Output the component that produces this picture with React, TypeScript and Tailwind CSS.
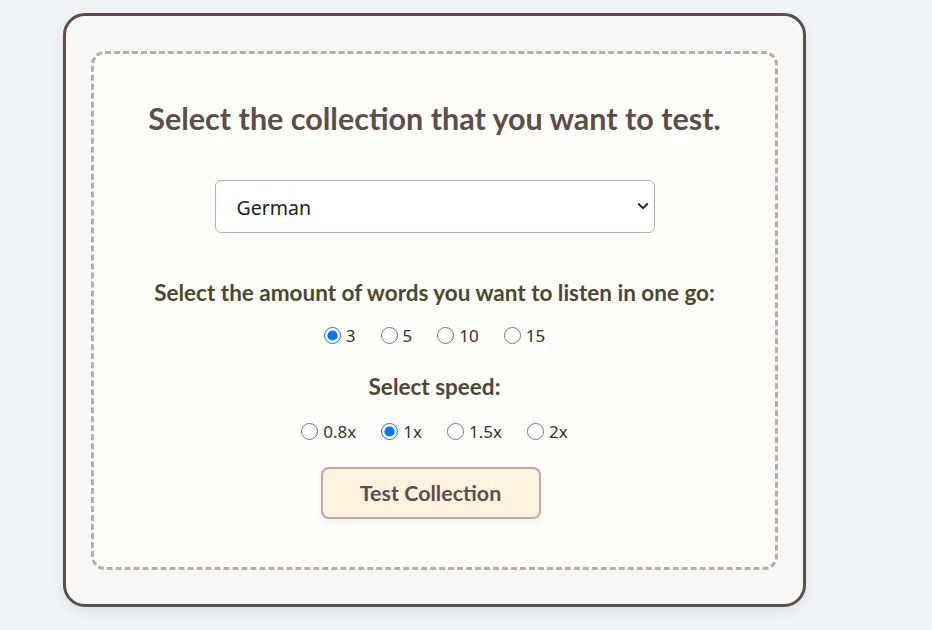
import { useState } from 'react';

const speeds = ['0.8x', '1x', '1.5x', '2x'];
const amounts = ['3', '5', '10', '15'];

function RadioRow({ name, options, value, onChange }: { name: string; options: string[]; value: string; onChange: (v: string) => void }) {
  return (
    <div className="flex justify-center items-center gap-[25px] h-[20px]">
      {options.map((o) => (
        <label key={o} className="flex items-center gap-[5px] text-[17px] text-[#333] font-['Noto_Sans',sans-serif] leading-none cursor-pointer">
          <input
            type="radio"
            name={name}
            checked={value === o}
            onChange={() => onChange(o)}
            className="w-[17px] h-[17px] m-0 accent-[#0075ff]"
          />
          {o}
        </label>
      ))}
    </div>
  );
}

export default function App() {
  const [amount, setAmount] = useState('3');
  const [speed, setSpeed] = useState('1x');

  return (
    <div className="min-h-screen bg-[#f0f4f8] pt-[13px] pl-[63px] font-['Lato',sans-serif]">
      <div className="w-[743px] rounded-[22px] border-[3px] border-[#5d4e4a] bg-[#f8f7f6] px-[25px] pt-[35px] pb-[34px] shadow-[0_4px_14px_rgba(0,0,0,0.08)]">
        <div className="flex flex-col items-center rounded-[14px] border-[3px] border-dashed border-[#bcaaa4] bg-[#fffdfa] pt-[46px] pb-[48px]">
          {/* Title */}
          <h1 className="text-[30.5px] leading-[36px] font-bold text-[#5d4e4a]">Select the collection that you want to test.</h1>

          {/* Collection select */}
          <div className="relative mt-[44px] w-[440px]">
            <select className="w-full h-[53px] appearance-none rounded-[6px] border border-[#bcaaa4] bg-white pl-[21px] pt-[3px] text-[19.5px] text-[#222] font-['Noto_Sans',sans-serif] outline-none">
              <option>German</option>
              <option>French</option>
              <option>Spanish</option>
            </select>
            <svg className="pointer-events-none absolute right-[6px] top-[22px]" width="12" height="8" viewBox="0 0 12 8" fill="none">
              <path d="M1.2 1.5l4.8 4.6 4.8-4.6" stroke="#222" strokeWidth="1.9" />
            </svg>
          </div>

          {/* Amount */}
          <p className="mt-[48px] text-[22.5px] leading-[24px] font-bold text-[#4b4a2f]">Select the amount of words you want to listen in one go:</p>
          <div className="mt-[20px]">
            <RadioRow name="amount" options={amounts} value={amount} onChange={setAmount} />
          </div>

          {/* Speed */}
          <p className="mt-[30px] text-[22.5px] leading-[24px] font-bold text-[#4b4a2f]">Select speed:</p>
          <div className="mt-[22px]">
            <RadioRow name="speed" options={speeds} value={speed} onChange={setSpeed} />
          </div>

          <button
            type="button"
            className="mt-[26px] mr-[8px] w-[220px] h-[52px] rounded-[8px] border-2 border-[#bcaaa4] bg-[#fff3e0] text-[21.5px] font-bold text-[#5d4e4a] shadow-[0_2px_6px_rgba(0,0,0,0.08)]"
          >
            Test Collection
          </button>
        </div>
      </div>
    </div>
  );
}
